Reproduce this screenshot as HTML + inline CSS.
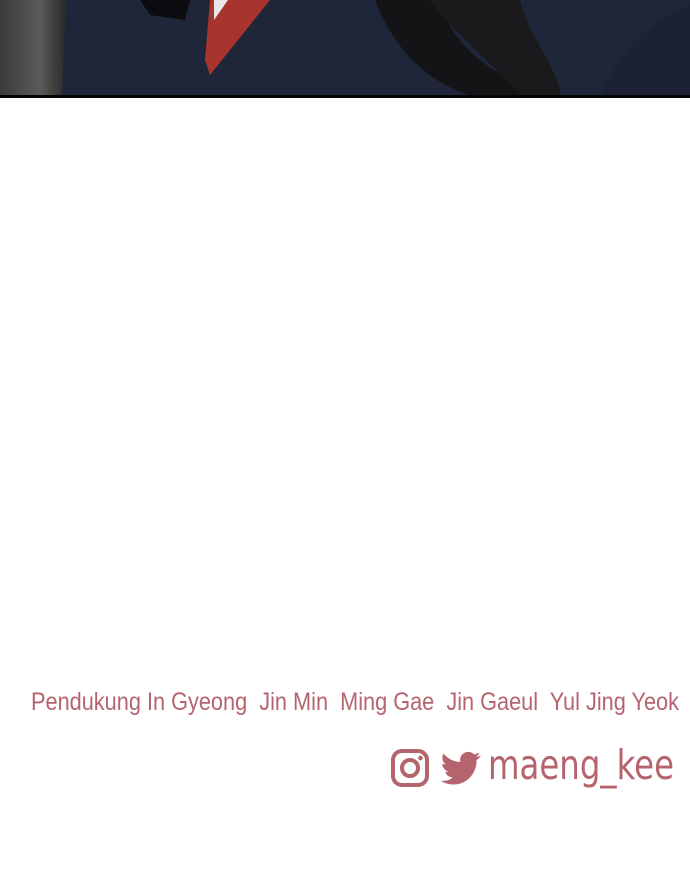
<!DOCTYPE html>
<html><head><meta charset="utf-8"><style>
html,body{margin:0;padding:0;background:#fff;width:690px;height:874px;overflow:hidden}
.panel{position:absolute;left:0;top:0;width:690px;height:95px;background:#1e2538;overflow:hidden}
.line{position:absolute;left:0;top:95px;width:690px;height:3px;background:#050505}
</style></head><body>
<div class="panel">
<svg width="690" height="95" viewBox="0 0 690 95">
<defs><linearGradient id="g" x1="0" x2="1"><stop offset="0" stop-color="#3a3a3a"/><stop offset="0.6" stop-color="#5a5a58"/><stop offset="1" stop-color="#2a2a2a"/></linearGradient></defs>
<rect x="0" y="0" width="66" height="95" fill="url(#g)"/>
<path d="M66 0 L62 95 L690 95 L690 0Z" fill="#1f2639"/>
<path d="M140 0 L190 0 L185 20 L150 15Z" fill="#0c0c10"/>
<path d="M210 0 L270 0 L210 75 L205 60Z" fill="#a8352d"/>
<path d="M214 0 L228 0 L214 20Z" fill="#e8e8ea"/>
<path d="M375 0 L440 0 C450 40 480 70 545 95 L470 95 C420 80 390 40 375 0Z" fill="#141416"/>
<path d="M430 0 L520 0 C530 40 560 70 560 95 L520 95 C490 60 450 30 430 0Z" fill="#1a1a1c"/>
<path d="M600 95 C620 50 650 20 690 5 L690 95Z" fill="#1c2234"/>
</svg>
</div>
<div class="line"></div>
<svg style="position:absolute;left:0;top:0" width="690" height="874">
<text x="31" y="710" textLength="648" lengthAdjust="spacingAndGlyphs" font-family="Liberation Sans, sans-serif" font-size="25" fill="#b5646e" xml:space="preserve">Pendukung In Gyeong  Jin Min  Ming Gae  Jin Gaeul  Yul Jing Yeok</text>
<rect x="393" y="751" width="34" height="34" rx="9" fill="none" stroke="#b5646e" stroke-width="4"/>
<circle cx="410" cy="768" r="8" fill="none" stroke="#b5646e" stroke-width="4"/>
<circle cx="420.5" cy="758" r="2.3" fill="#b5646e"/>
<g transform="translate(439,750) scale(1.12)">
<path d="M37 5 c-1.3 .6 -2.7 1 -4.2 1.2 c1.5-.9 2.6-2.3 3.2-4 c-1.4.8-3 1.4-4.6 1.8 c-1.3-1.4-3.2-2.3-5.3-2.3 c-4 0-7.3 3.3-7.3 7.3 c0 .6.1 1.1.2 1.7 c-6-.3-11.4-3.2-15-7.6 c-.6 1.1-1 2.3-1 3.7 c0 2.5 1.3 4.8 3.2 6.1 c-1.2 0-2.300-.4-3.3-.9 c0 3.6 2.5 6.6 5.9 7.2 c-.6.2-1.3.3-1.9.3 c-.5 0-.9 0-1.4-.1 c.9 2.9 3.6 5.100 6.8 5.1 c-2.5 2-5.7 3.1-9.100 3.1 c-.6 0-1.2 0-1.7-.1 c3.2 2.1 7.1 3.3 11.2 3.3 c13.5 0 20.8-11.2 20.8-20.8 v-1 c1.4-1 2.7-2.3 3.7-3.8z" fill="#b5646e"/>
</g>
<text x="488" y="779" textLength="186" lengthAdjust="spacingAndGlyphs" font-family="DejaVu Sans, sans-serif" font-size="41" fill="#b5646e">maeng_kee</text>
</svg>
</body></html>
